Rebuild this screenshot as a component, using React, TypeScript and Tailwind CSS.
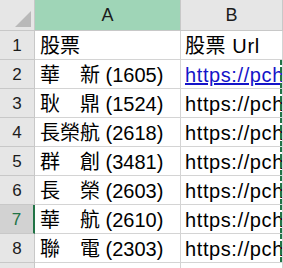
import React from "react";

const rows: { name: string; url: string; link?: boolean }[] = [
  { name: "股票", url: "股票 Url" },
  { name: "華　新 (1605)", url: "https://pchome", link: true },
  { name: "耿　鼎 (1524)", url: "https://pchome" },
  { name: "長榮航 (2618)", url: "https://pchome" },
  { name: "群　創 (3481)", url: "https://pchome" },
  { name: "長　榮 (2603)", url: "https://pchome" },
  { name: "華　航 (2610)", url: "https://pchome" },
  { name: "聯　電 (2303)", url: "https://pchome" },
  { name: "", url: "" },
];

const font = { fontFamily: '"Liberation Sans", "Noto Sans CJK TC", sans-serif' };

export default function App() {
  return (
    <div className="w-[283px] h-[268px] overflow-hidden bg-white" style={font}>
      <div className="grid grid-cols-[35px_146px_102px]">
        {/* header row */}
        <div className="relative h-[31px] bg-[#e6e6e6] border-r border-b border-[#c8c8c8]">
          <div
            className="absolute right-[3px] bottom-[3px] w-[16px] h-[16px] bg-[#b9b9b9]"
            style={{ clipPath: "polygon(100% 0, 100% 100%, 0 100%)" }}
          />
        </div>
        <div className="h-[31px] bg-[#9fd5b7] border-r border-b border-[#c8c8c8] flex items-center justify-center text-[18px] text-[#1c1c1c]">
          A
        </div>
        <div className="h-[31px] bg-[#e6e6e6] border-r border-b border-[#c8c8c8] flex items-center justify-center text-[18px] text-[#1c1c1c]">
          B
        </div>
        {rows.map((r, i) => {
          const sel = i === 6;
          const ants = i >= 1 && i <= 7;
          return (
            <React.Fragment key={i}>
              <div
                className={
                  "h-[29px] border-b flex items-center justify-center text-[17px] pt-[1px] " +
                  (sel
                    ? "bg-[#d2d2d2] text-[#217346] border-[#c8c8c8] border-r-2 border-r-[#217346]"
                    : "bg-[#e6e6e6] text-[#1c1c1c] border-r border-[#c8c8c8]")
                }
              >
                {i + 1}
              </div>
              <div className="h-[29px] border-r border-b border-[#d4d4d4] pl-[5px] flex items-center text-[20px] text-black whitespace-nowrap overflow-hidden leading-none pt-[2px]">
                {r.name}
              </div>
              <div
                className={
                  "relative h-[29px] border-r border-b border-[#d4d4d4] pl-[4px] flex items-center text-[20px] whitespace-nowrap overflow-hidden leading-none pt-[2px] tracking-[0.6px]" +
                  (r.link ? " text-[#1414c8] underline" : " text-black")
                }
              >
                {r.url}
                {ants && (
                  <span className="absolute right-0 top-[-1px] bottom-[-1px] w-[2px] border-r-2 border-dashed border-[#217346]" />
                )}
              </div>
            </React.Fragment>
          );
        })}
      </div>
    </div>
  );
}
